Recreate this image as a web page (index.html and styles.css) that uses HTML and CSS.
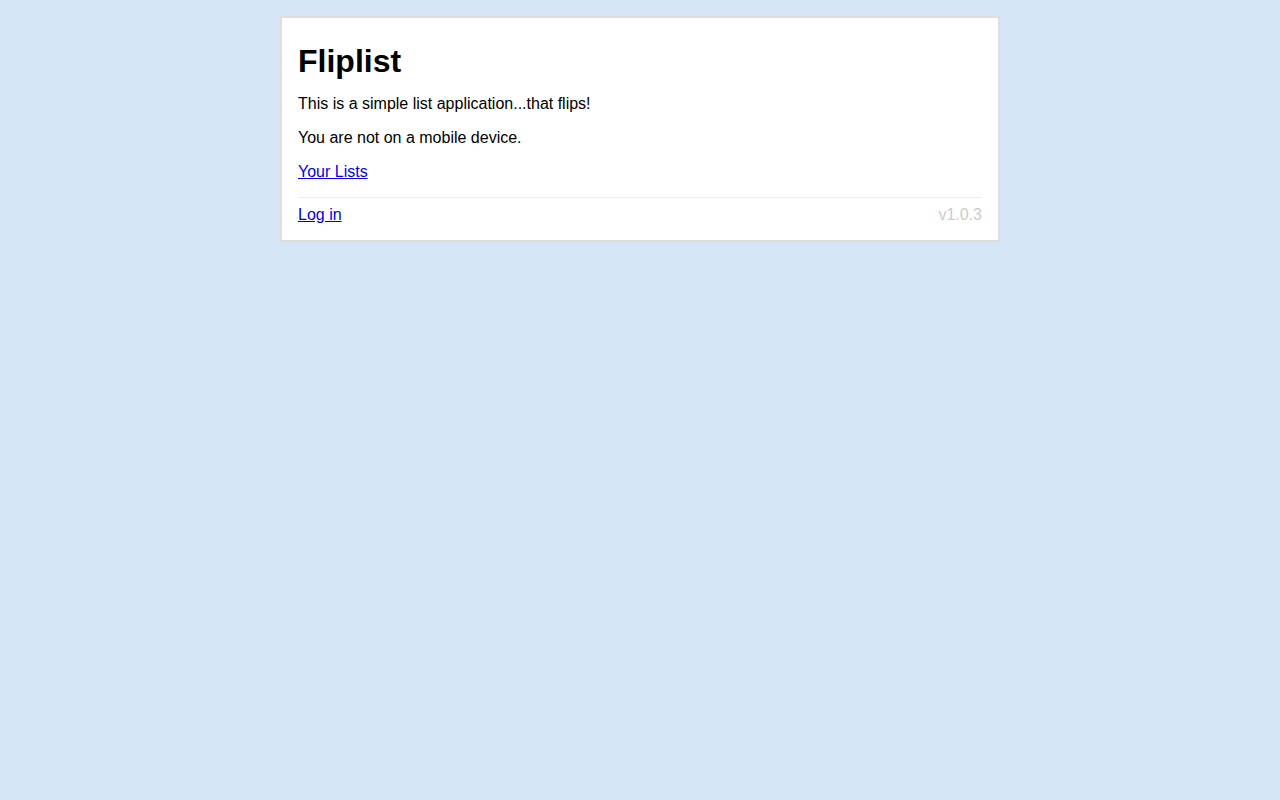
FILE: index.html
```html
<!DOCTYPE html>
<html lang="en">
<head>
    <meta charset="UTF-8">
    <meta name="viewport" content="width=device-width, initial-scale=1.0">
    <title>Fliplist</title>
    <link rel="stylesheet" href="styles.css">
</head>
<body>
    <div class="container">
        <h1>Fliplist</h1>
        <p>This is a simple list application...that flips!</p>
        <p>You are not on a mobile device.</p>
        <p><a href="#">Your Lists</a></p>
        <div class="footer">
            <a href="#">Log in</a>
            <span class="version">v1.0.3</span>
        </div>
    </div>
</body>
</html>
```

FILE: styles.css
```css
body {
    font-family: "Liberation Sans", Arial, sans-serif;
    font-size: 16px;
    margin: 0;
    padding: 16px 0;
    background-color: #d6e6f6;
    color: #000;
}
.container {
    width: 720px;
    margin: 0 auto;
    box-sizing: border-box;
    background-color: #fff;
    border: 2px solid #ddd;
    padding: 8px 16px 16px;
}
.container h1 {
    font-size: 32px;
    margin: 17px 0 15px;
}
.container p {
    margin: 0 0 16px;
}
.container a {
    color: #0000ee;
}
.footer {
    display: flex;
    justify-content: space-between;
    border-top: 1px solid #eee;
    padding-top: 8px;
}
.version {
    color: #ccc;
}
```
